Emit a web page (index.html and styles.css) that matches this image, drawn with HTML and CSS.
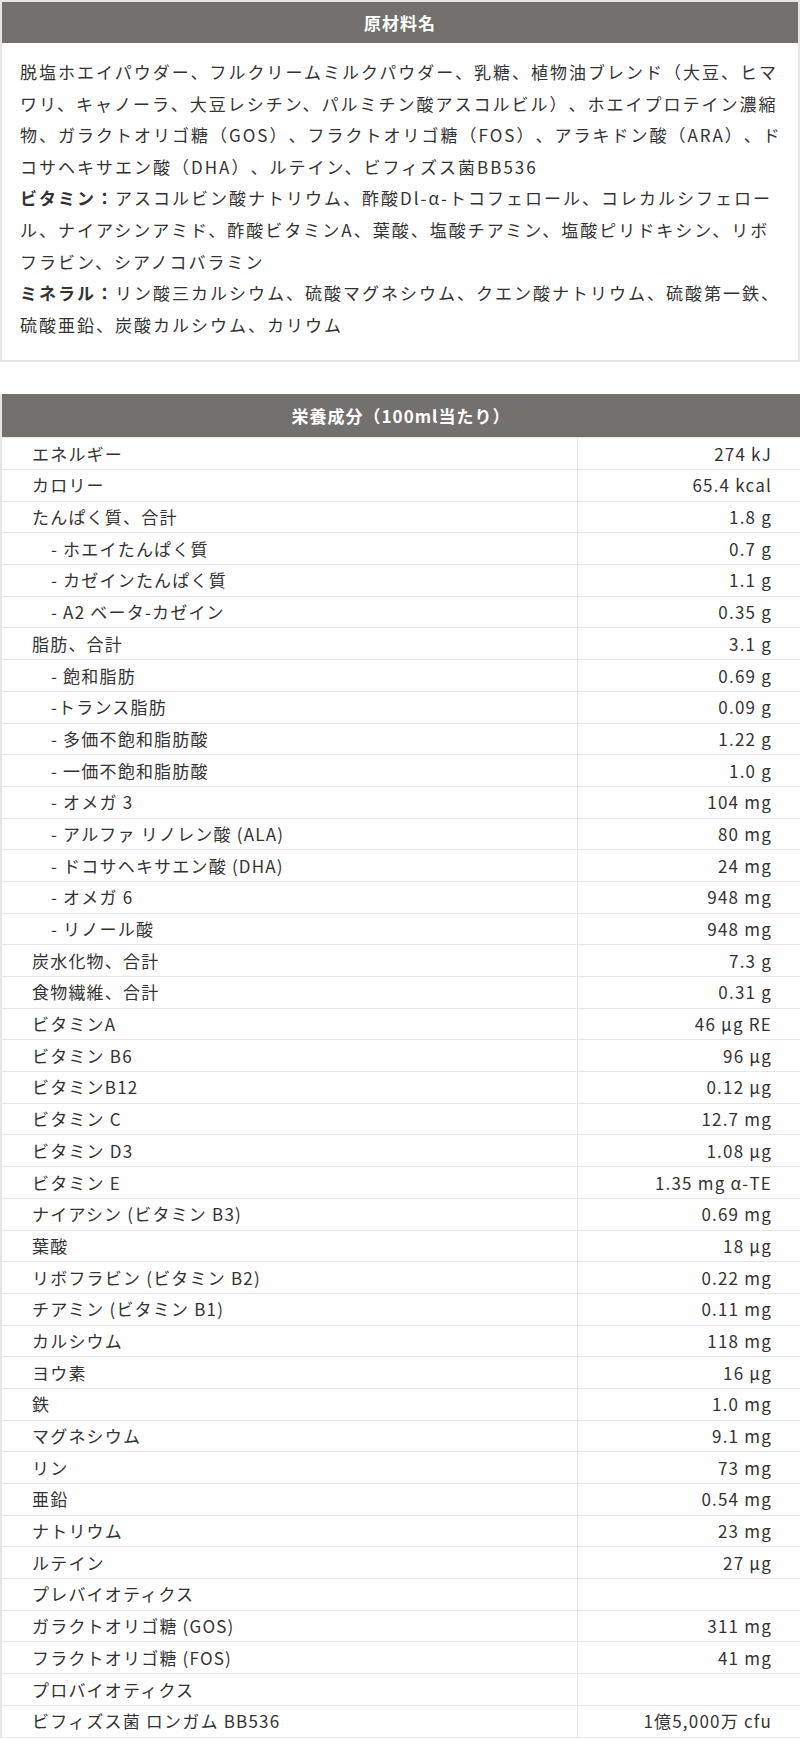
FILE: index.html
```html
<!DOCTYPE html>
<html lang="ja">
<head>
<meta charset="utf-8">
<title>原材料名・栄養成分</title>
<link rel="stylesheet" href="styles.css">
</head>
<body>
<section class="ingredients">
  <h2 class="bar">原材料名</h2>
  <div class="ing-body">
    <p>脱塩ホエイパウダー、フルクリームミルクパウダー、乳糖、植物油ブレンド（大豆、ヒマワリ、キャノーラ、大豆レシチン、パルミチン酸アスコルビル）、ホエイプロテイン濃縮物、ガラクトオリゴ糖（GOS）、フラクトオリゴ糖（FOS）、アラキドン酸（ARA）、ドコサヘキサエン酸（DHA）、ルテイン、ビフィズス菌BB536</p>
    <p><b>ビタミン：</b>アスコルビン酸ナトリウム、酢酸Dl-α-トコフェロール、コレカルシフェロール、ナイアシンアミド、酢酸ビタミンA、葉酸、塩酸チアミン、塩酸ピリドキシン、リボフラビン、シアノコバラミン</p>
    <p><b>ミネラル：</b>リン酸三カルシウム、硫酸マグネシウム、クエン酸ナトリウム、硫酸第一鉄、硫酸亜鉛、炭酸カルシウム、カリウム</p>
  </div>
</section>

<table class="nutrition">
  <colgroup>
    <col class="col-name">
    <col class="col-value">
  </colgroup>
  <thead>
    <tr><th colspan="2" class="bar">栄養成分（100ml当たり）</th></tr>
  </thead>
  <tbody>
    <tr><td>エネルギー</td><td class="v">274 kJ</td></tr>
    <tr><td>カロリー</td><td class="v">65.4 kcal</td></tr>
    <tr><td>たんぱく質、合計</td><td class="v">1.8 g</td></tr>
    <tr><td class="sub">- ホエイたんぱく質</td><td class="v">0.7 g</td></tr>
    <tr><td class="sub">- カゼインたんぱく質</td><td class="v">1.1 g</td></tr>
    <tr><td class="sub">- A2 ベータ-カゼイン</td><td class="v">0.35 g</td></tr>
    <tr><td>脂肪、合計</td><td class="v">3.1 g</td></tr>
    <tr><td class="sub">- 飽和脂肪</td><td class="v">0.69 g</td></tr>
    <tr><td class="sub">-トランス脂肪</td><td class="v">0.09 g</td></tr>
    <tr><td class="sub">- 多価不飽和脂肪酸</td><td class="v">1.22 g</td></tr>
    <tr><td class="sub">- 一価不飽和脂肪酸</td><td class="v">1.0 g</td></tr>
    <tr><td class="sub">- オメガ 3</td><td class="v">104 mg</td></tr>
    <tr><td class="sub">- アルファ リノレン酸 (ALA)</td><td class="v">80 mg</td></tr>
    <tr><td class="sub">- ドコサヘキサエン酸 (DHA)</td><td class="v">24 mg</td></tr>
    <tr><td class="sub">- オメガ 6</td><td class="v">948 mg</td></tr>
    <tr><td class="sub">- リノール酸</td><td class="v">948 mg</td></tr>
    <tr><td>炭水化物、合計</td><td class="v">7.3 g</td></tr>
    <tr><td>食物繊維、合計</td><td class="v">0.31 g</td></tr>
    <tr><td>ビタミンA</td><td class="v">46 µg RE</td></tr>
    <tr><td>ビタミン B6</td><td class="v">96 µg</td></tr>
    <tr><td>ビタミンB12</td><td class="v">0.12 µg</td></tr>
    <tr><td>ビタミン C</td><td class="v">12.7 mg</td></tr>
    <tr><td>ビタミン D3</td><td class="v">1.08 µg</td></tr>
    <tr><td>ビタミン E</td><td class="v">1.35 mg α-TE</td></tr>
    <tr><td>ナイアシン (ビタミン B3)</td><td class="v">0.69 mg</td></tr>
    <tr><td>葉酸</td><td class="v">18 µg</td></tr>
    <tr><td>リボフラビン (ビタミン B2)</td><td class="v">0.22 mg</td></tr>
    <tr><td>チアミン (ビタミン B1)</td><td class="v">0.11 mg</td></tr>
    <tr><td>カルシウム</td><td class="v">118 mg</td></tr>
    <tr><td>ヨウ素</td><td class="v">16 µg</td></tr>
    <tr><td>鉄</td><td class="v">1.0 mg</td></tr>
    <tr><td>マグネシウム</td><td class="v">9.1 mg</td></tr>
    <tr><td>リン</td><td class="v">73 mg</td></tr>
    <tr><td>亜鉛</td><td class="v">0.54 mg</td></tr>
    <tr><td>ナトリウム</td><td class="v">23 mg</td></tr>
    <tr><td>ルテイン</td><td class="v">27 µg</td></tr>
    <tr><td>プレバイオティクス</td><td class="v"></td></tr>
    <tr><td>ガラクトオリゴ糖 (GOS)</td><td class="v">311 mg</td></tr>
    <tr><td>フラクトオリゴ糖 (FOS)</td><td class="v">41 mg</td></tr>
    <tr><td>プロバイオティクス</td><td class="v"></td></tr>
    <tr><td>ビフィズス菌 ロンガム BB536</td><td class="v">1億5,000万 cfu</td></tr>
  </tbody>
</table>
</body>
</html>
```

FILE: styles.css
```css
html, body {
  margin: 0;
  padding: 0;
  background: #ffffff;
}

body {
  width: 800px;
  font-family: "Noto Sans CJK JP", "Noto Sans", sans-serif;
  color: #333333;
  font-size: 17px;
  text-spacing-trim: space-all;
}

.bar {
  background: #73706e;
  color: #ffffff;
  font-size: 17px;
  font-weight: 700;
  text-align: center;
  letter-spacing: 1px;
  margin: 0;
  height: 41px;
  line-height: 41px;
  padding: 0;
}

.ingredients {
  border: 2px solid #e6e6e6;
}

.ing-body {
  padding: 13px 14px 20px 18px;
  letter-spacing: 2px;
  line-height: 31.6px;
}

.ing-body p {
  margin: 0;
}

.ing-body b {
  font-weight: 700;
}

.nutrition {
  margin-top: 32px;
  width: 800px;
  border-collapse: collapse;
  table-layout: fixed;
}

.col-name {
  width: 576px;
}

.col-value {
  width: 224px;
}

.nutrition th.bar {
  height: 43px;
  border: 0;
  border-left: 2px solid #e6e6e6;
  border-right: 2px solid #e6e6e6;
}

.nutrition td {
  border: 1px solid #e6e6e6;
  padding: 0 0 0 30px;
  height: 30.7px;
  line-height: 30px;
  letter-spacing: 1.2px;
  white-space: nowrap;
}

.nutrition td:first-child {
  border-left-width: 2px;
}

.nutrition td.v {
  text-align: right;
  padding: 0 28px 0 0;
  border-right-width: 2px;
}

.nutrition td.sub {
  padding-left: 49px;
}
```
